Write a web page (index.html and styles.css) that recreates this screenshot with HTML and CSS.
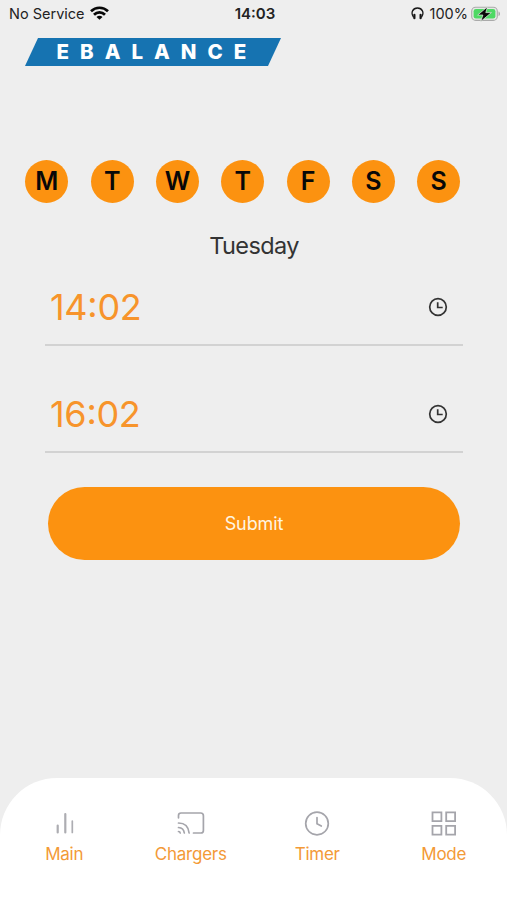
FILE: index.html
```html
<!DOCTYPE html>
<html lang="en">
<head>
<meta charset="utf-8">
<title>Ebalance timer</title>
<link rel="stylesheet" href="styles.css">
</head>
<body>
<div class="screen">
  <header class="status">
    <div class="status-left"><span class="carrier">No Service</span>
      <svg class="wifi" width="19" height="14" viewBox="0 0 19 14" fill="none" stroke="#080808" stroke-width="2.7"><path d="M1 5.200C5.800.6 13.200.6 18 5.200M4 8.700c3.100-3.200 7.900-3.200 11 0"/><path d="M9.500 13.800 6.500 10.900c1.700-1.500 4.300-1.500 6 0z" fill="#080808" stroke="none"/></svg>
    </div>
    <span class="clock">14:03</span>
    <div class="status-right">
      <svg class="headphones" width="13" height="13" viewBox="0 0 13 13" fill="none" stroke="#181818" stroke-width="1.300"><path d="M2.600 10.300C-.8 5.600 2 1 6.500 1s7.300 4.600 3.900 9.300"/><path d="M3.400 7.800v3.400M9.600 7.800v3.400" stroke-width="2.200" stroke-linecap="round"/></svg>
      <span class="percent">100%</span>
      <svg class="battery" width="30" height="16" viewBox="0 0 30 16"><rect x=".7" y="1.200" width="25.600" height="13.200" rx="4" fill="#e4e9e4" stroke="#aaa" stroke-width="1.100"/><rect x="2.600" y="3" width="21.800" height="9.600" rx="2.300" fill="#4dd964"/><path d="M27.500 5.500c2 .7 2 3.900 0 4.600z" fill="#aaa"/><path d="M16.500.8 6.700 9h5.200L9.800 15.400l10.600-8.800h-5.600z" fill="#080808" stroke="#e8f3e8" stroke-width=".7"/></svg>
    </div>
  </header>
  <div class="logo"><span class="logo-text">EBALANCE</span></div>
  <main>
    <div class="days"><span>M</span><span>T</span><span>W</span><span>T</span><span>F</span><span>S</span><span>S</span></div>
    <h1><span class="day-name">Tuesday</span></h1>
    <div class="field"><span class="time">14<span class="colon">:</span>02</span>
      <svg width="20" height="20" viewBox="0 0 20 20" fill="none" stroke="#333" stroke-width="1.700"><circle cx="10" cy="10" r="8.300"/><path d="M9.700 5.300v5.200h5"/></svg></div>
    <div class="field"><span class="time">16<span class="colon">:</span>02</span>
      <svg width="20" height="20" viewBox="0 0 20 20" fill="none" stroke="#333" stroke-width="1.700"><circle cx="10" cy="10" r="8.300"/><path d="M9.700 5.300v5.200h5"/></svg></div>
    <button class="submit"><span class="submit-text">Submit</span></button>
  </main>
  <nav>
    <a class="tab"><svg width="30" height="30" viewBox="0 0 30 30" fill="none" stroke="#adadb2" stroke-width="2.200" stroke-linecap="round"><path d="M8.700 16.500v7M16.300 5v18.500"/><path d="M23.300 12v11.500" stroke-width="1.700"/></svg><span>Main</span></a>
    <a class="tab"><svg width="30" height="30" viewBox="0 0 30 30" fill="none" stroke="#a5a5ab" stroke-width="1.700" stroke-linecap="round"><path d="M2.500 8.800V6.500Q2.500 4 5 4H24.700Q27.400 4 27.400 6.700V21.500Q27.400 24 24.900 24H17.500M2.500 14q9.600 0 10.600 10M2.500 18.500q5.200.3 5.800 5.500M2.500 22.500q1.500 0 1.700 1.500"/></svg><span>Chargers</span></a>
    <a class="tab"><svg width="30" height="30" viewBox="0 0 30 30" fill="none" stroke="#a5a5ab" stroke-width="1.700" stroke-linecap="round"><circle cx="15" cy="14.500" r="11.300"/><path d="M15 8.500v6.200l4.300 2.300"/></svg><span>Timer</span></a>
    <a class="tab"><svg width="30" height="30" viewBox="0 0 30 30" fill="none" stroke="#a5a5ab" stroke-width="1.800"><path d="M3.500 3.300h8.900v8.900H3.500zM17.200 3.300h8.900v8.900h-8.900zM3.500 16.800h8.900v8.900H3.500zM17.200 16.800h8.900v8.900h-8.900z"/></svg><span>Mode</span></a>
  </nav>
</div>
</body>
</html>
```
FILE: styles.css
```css
* { box-sizing: border-box; }
body { margin: 0; background: #eee; font-family: Inter, "Liberation Sans", sans-serif; }
.screen { width: 507px; height: 900px; display: flex; flex-direction: column; background: #eee; overflow: hidden; }
.status { height: 28px; flex: none; display: grid; grid-template-columns: 1fr auto 1fr; align-items: center; padding: 0 6px 1px 9px; font-size: 14.5px; color: #222; }
.status-left, .status-right { display: flex; align-items: center; }
.status-right { justify-content: flex-end; }
.wifi { margin-left: 5px; margin-top: -1px; }
.clock { font-weight: 600; font-size: 15px; letter-spacing: 0; }
.headphones { margin-right: 6px; }
.percent { margin-right: 3px; }
.logo { flex: none; width: 256px; height: 28px; margin: 10px 0 0 25px; padding-left: 31.5px; background: #1673b1; clip-path: polygon(13px 0, 100% 0, 243px 100%, 0 100%); color: #fff; font: 800 20.5px/28px Inter, sans-serif; letter-spacing: 11px; }
main { flex: 1; }
.days { display: flex; gap: 22.3px; margin: 93.500px 0 0 25.400px; }
.days span { width: 43px; height: 43px; border-radius: 50%; background: #fc9210; color: #080808; font-size: 25px; font-weight: 600; line-height: 43.5px; text-align: center; }
h1 { margin: 27px 0 0; height: 32px; padding-left: 1px; text-align: center; font-size: 23.5px; line-height: 32px; font-weight: 400; letter-spacing: -.6px; color: #333; }
.field { display: flex; justify-content: space-between; align-items: center; width: 418px; height: 84px; margin: 0 0 0 45px; padding: 8px 15px 0 5px; border-bottom: 2px solid #d2d2d2; }
h1 + .field { height: 84px; margin-bottom: 23px; }
.time { display: flex; font-size: 36px; line-height: 44px; letter-spacing: -.3px; color: #f7942b; }
.colon { margin-top: -3px; }
.submit { display: block; width: 412px; height: 73px; margin: 34px 0 0 48px; padding: 0; border: 0; border-radius: 37px; background: #fc9210; color: #fff5e2; font: 400 18px/73px Inter, sans-serif; letter-spacing: -.1px; }
nav { flex: none; display: flex; height: 122px; padding: 31px 0 0 1px; background: #fff; border-radius: 57px 57px 0 0; }
.tab { width: 126.500px; display: flex; flex-direction: column; align-items: center; color: #f39a37; font-size: 17px; line-height: 24px; letter-spacing: -.25px; }
.tab svg { display: block; margin-bottom: 3px; }
```
